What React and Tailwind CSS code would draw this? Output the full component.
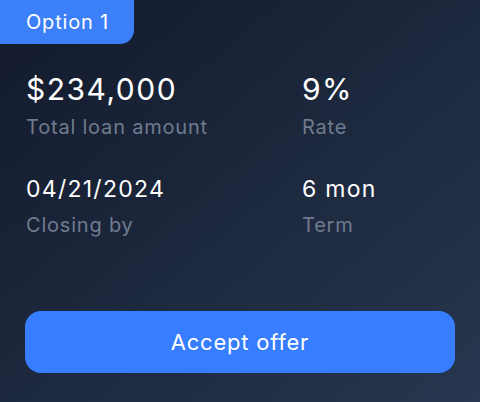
import React from "react";

const items = [
  { value: "$234,000", label: "Total loan amount", big: true },
  { value: "9%", label: "Rate", big: true },
  { value: "04/21/2024", label: "Closing by" },
  { value: "6 mon", label: "Term" },
];

export default function App() {
  return (
    <div className="w-[480px] h-[402px] flex flex-col bg-gradient-to-br from-[#131a2c] to-[#26374f] font-['Inter',sans-serif] overflow-hidden">
      <div className="self-start h-[44px] w-[134px] flex items-center pl-[26px] bg-[#3b80f9] rounded-br-[14px] text-white text-[20px] tracking-[0.04em]">
        Option 1
      </div>

      <div className="grid grid-cols-[276px_1fr] px-[26px] pt-[27px] gap-y-[32px]">
        {items.map((it) => (
          <div key={it.label} className="flex flex-col gap-[6px]">
            <span
              className={
                it.big
                  ? "text-[30px] leading-[36px] tracking-[0.05em] text-white"
                  : "text-[23px] leading-[32px] tracking-[0.055em] text-white"
              }
            >
              {it.value}
            </span>
            <span className="text-[20px] leading-[28px] tracking-[0.04em] text-[#707b8e]">
              {it.label}
            </span>
          </div>
        ))}
      </div>

      <div className="px-[25px] mt-auto mb-[29px]">
        <button className="w-full h-[62px] rounded-[16px] bg-[#377dff] text-white text-[22px] tracking-[0.035em]">
          Accept offer
        </button>
      </div>
    </div>
  );
}
